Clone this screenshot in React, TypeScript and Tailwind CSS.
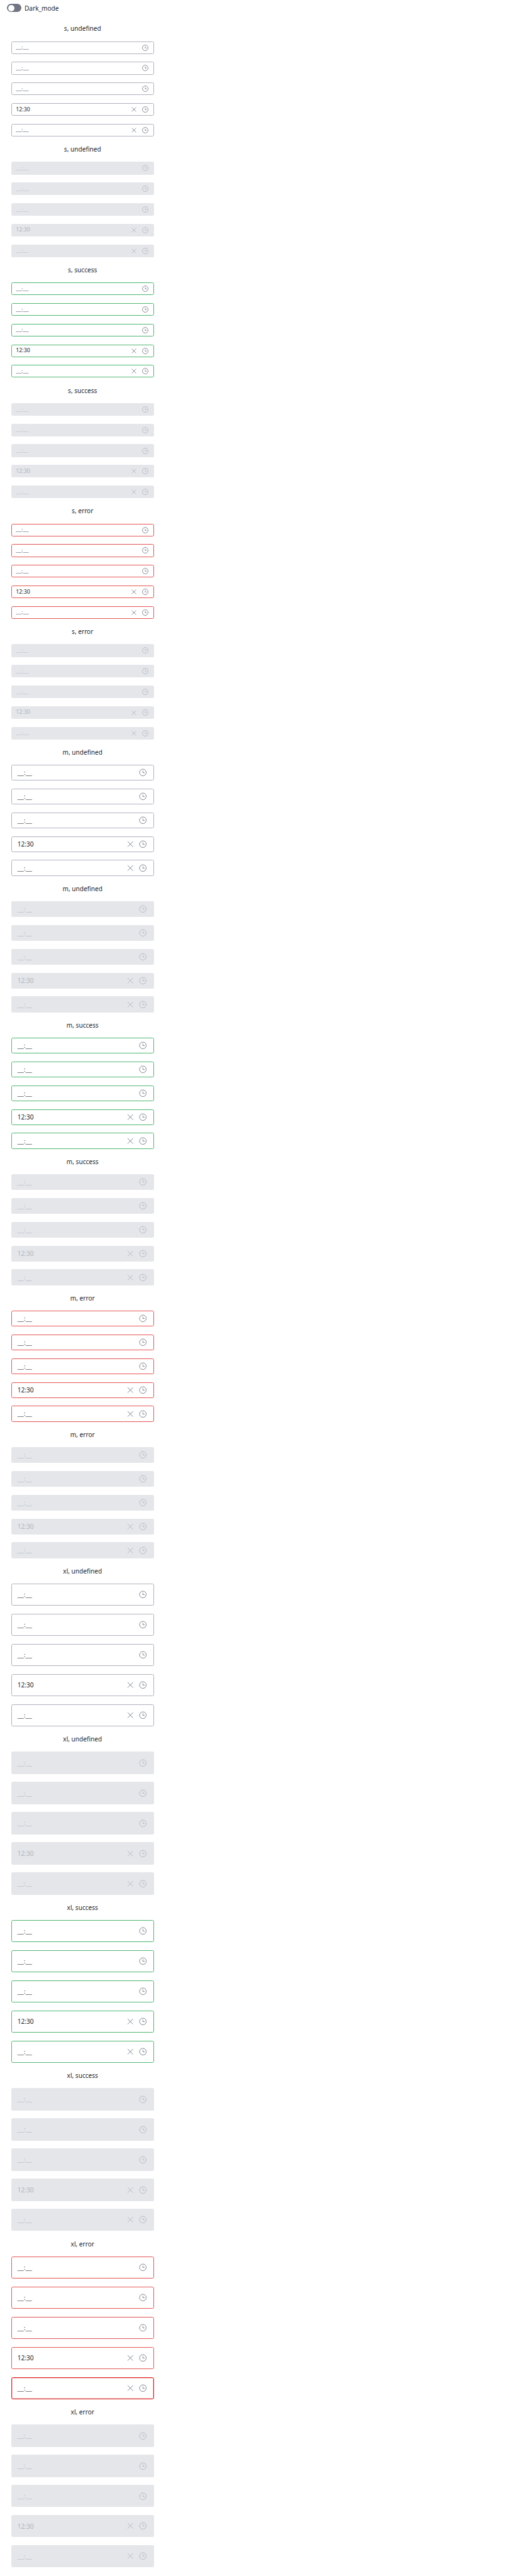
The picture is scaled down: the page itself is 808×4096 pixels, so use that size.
type Size = "s" | "m" | "xl";
type State = "undefined" | "success" | "error";

const SIZES: Size[] = ["s", "m", "xl"];
const STATES: State[] = ["undefined", "success", "error"];

const BOX: Record<Size, string> = {
  s: "h-[20.19px] pl-[7.57px] pr-[8.83px] text-[8.83px]",
  m: "h-[25.24px] pl-[10.1px] pr-[11.36px] text-[10.1px]",
  xl: "h-[35.33px] pl-[10.1px] pr-[11.36px] text-[10.1px]",
};

const BORDER: Record<State, string> = {
  undefined: "border-[#b0b3be]",
  success: "border-[#4fb772]",
  error: "border-[#e45656]",
};

function Clock({ size }: { size: Size }) {
  return size === "s" ? (
    <svg className="size-[10.1px] shrink-0" viewBox="0 0 16 16" fill="none" stroke="currentColor" strokeWidth="1.3">
      <circle cx="8" cy="8" r="7.1" />
      <path d="M8 4.5V8.5H11.5" />
    </svg>
  ) : (
    <svg className="size-[12.62px] shrink-0" viewBox="0 0 20 20" fill="none" stroke="currentColor" strokeWidth="1.4">
      <circle cx="10" cy="10" r="8.4" />
      <path d="M10 5.5V10.5H14.5" />
    </svg>
  );
}

function Cross({ size }: { size: Size }) {
  return size === "s" ? (
    <svg className="mr-[7.57px] size-[10.1px] shrink-0" viewBox="0 0 16 16" fill="none" stroke="currentColor" strokeWidth="1.3">
      <path d="M2.5 2.5l11 11M13.5 2.5l-11 11" />
    </svg>
  ) : (
    <svg className="mr-[7.57px] size-[12.62px] shrink-0" viewBox="0 0 20 20" fill="none" stroke="currentColor" strokeWidth="1.4">
      <path d="M3.2 3.2l13.6 13.6M16.8 3.2L3.2 16.8" />
    </svg>
  );
}

interface TimeInputProps {
  size: Size;
  state: State;
  disabled: boolean;
  value?: string;
  clearable?: boolean;
  focused?: boolean;
}

function TimeInput({ size, state, disabled, value, clearable, focused }: TimeInputProps) {
  const look = disabled
    ? "bg-[#e4e6ea] text-[#b1b5be]"
    : focused
      ? "border border-[#da1e1e] shadow-[inset_0_0_0_1px_rgba(218,30,30,0.26)]"
      : `border ${BORDER[state]}`;
  return (
    <div className={`flex items-center rounded-[2.5px] ${BOX[size]} ${look}`}>
      <div className={`flex-1 leading-none whitespace-nowrap ${disabled ? "" : "-ml-px"}`}>
        {value ?? <span className="font-['Liberation_Serif',serif]">__:__</span>}
      </div>
      <div className={`flex items-center ${disabled ? "" : "-mr-px text-[#717682]"}`}>
        {clearable && <Cross size={size} />}
        <Clock size={size} />
      </div>
    </div>
  );
}

function Section({ size, state, disabled }: { size: Size; state: State; disabled: boolean }) {
  return (
    <section>
      <h2 className="flex h-[40.38px] items-center justify-center text-[10.1px] leading-none">
        {`${size}, ${state}`}
      </h2>
      <div className="flex flex-col gap-[12.62px]">
        <TimeInput size={size} state={state} disabled={disabled} />
        <TimeInput size={size} state={state} disabled={disabled} />
        <TimeInput size={size} state={state} disabled={disabled} />
        <TimeInput size={size} state={state} disabled={disabled} value="12:30" clearable />
        <TimeInput
          size={size}
          state={state}
          disabled={disabled}
          clearable
          focused={size === "xl" && state === "error" && !disabled}
        />
      </div>
    </section>
  );
}

export default function App() {
  return (
    <main className="h-[4096px] overflow-hidden bg-white font-['Noto_Sans',sans-serif] text-[#23262d]">
      <header className="flex h-[25.24px] items-center pl-[11.36px] text-[10.1px] leading-none">
        <span className="flex h-[12.62px] w-[22.72px] items-center rounded-full bg-[#717682] pl-[1.26px]">
          <span className="size-[10.1px] rounded-full bg-white" />
        </span>
        <span className="ml-[4.9px]">Dark_mode</span>
      </header>
      <div className="ml-[17.67px] w-[227.2px]">
        {SIZES.map((size) =>
          STATES.map((state) =>
            [false, true].map((disabled) => (
              <Section key={`${size}-${state}-${disabled}`} size={size} state={state} disabled={disabled} />
            )),
          ),
        )}
      </div>
    </main>
  );
}
